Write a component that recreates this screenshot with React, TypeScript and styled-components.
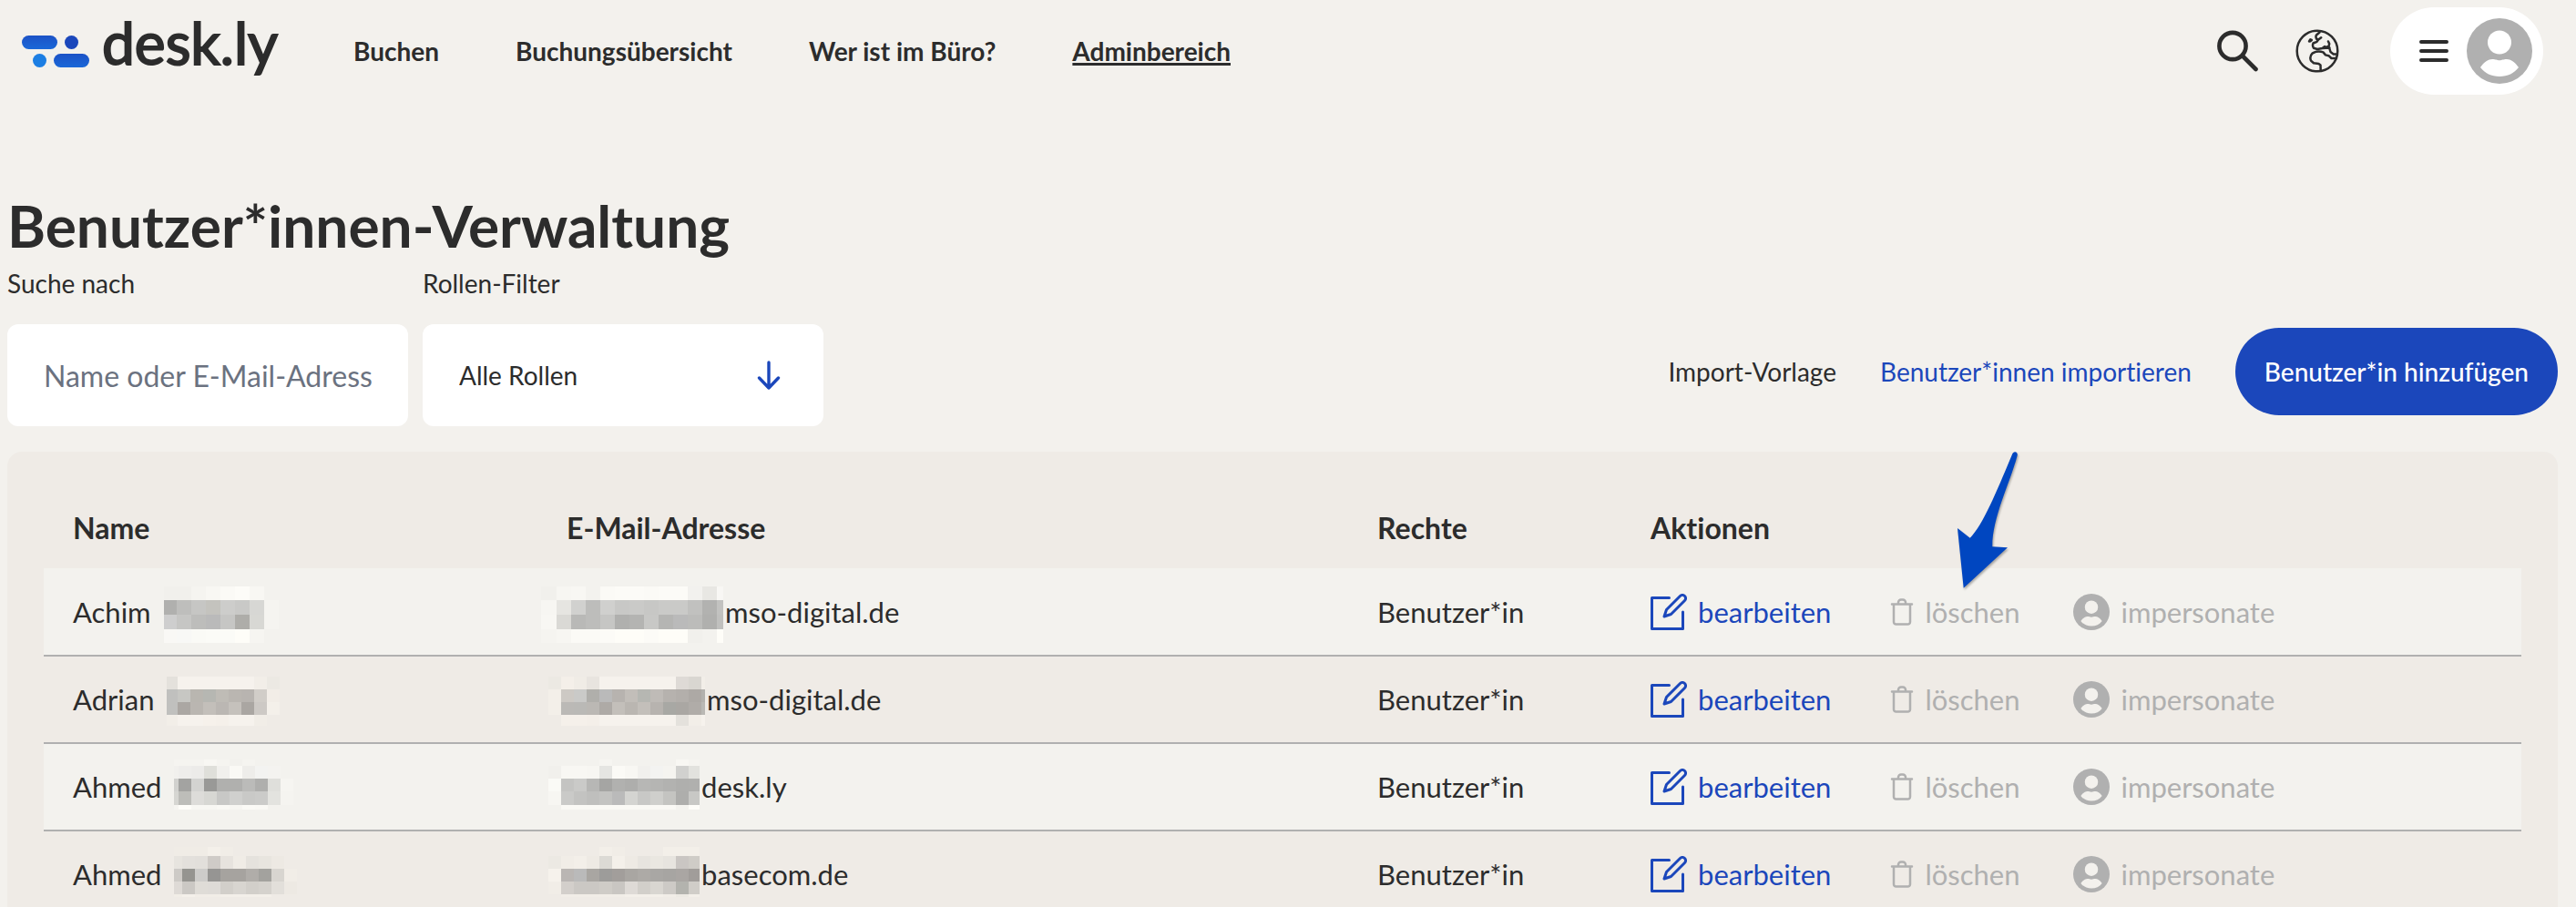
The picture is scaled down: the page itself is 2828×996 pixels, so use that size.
import React from "react";
import styled, { createGlobalStyle } from "styled-components";

const ink = "#2c2c2c";
const blue = "#1b47bb";
const muted = "#b0b0b0";
const paper = "#f3f1ed";
const sand = "#efebe6";

const GlobalStyle = createGlobalStyle`
  *, *::before, *::after { box-sizing: border-box; }
  body {
    margin: 0;
    background: ${paper};
    color: ${ink};
    font-family: Lato, "Open Sans", sans-serif;
    font-size: 28px;
    font-variant-ligatures: none;
    line-height: 34px;
  }
  button, input, select { font: inherit; color: inherit; }
`;

const Page = styled.div`
  height: 100vh;
  overflow: hidden;
`;

const Header = styled.header`
  display: flex;
  align-items: center;
  height: 112px;
  padding: 0 36px 0 24px;
`;

const Logo = styled.a`
  display: flex;
  align-items: center;
  gap: 12px;
  flex: 0 0 364px;
  color: inherit;
  text-decoration: none;
`;

const Wordmark = styled.span`
  padding-bottom: 18px;
  font-size: 64px;
  -webkit-text-stroke: 2px currentColor;
  line-height: 76px;
`;

const Nav = styled.nav`
  display: flex;
  gap: 84px;
`;

const NavLink = styled.a<{ $active?: boolean }>`
  color: inherit;
  font-weight: 700;
  white-space: nowrap;
  text-decoration: ${(p) => (p.$active ? "underline" : "none")};
  text-decoration-thickness: 3px;
  text-decoration-skip-ink: none;
`;

const HeaderTools = styled.div`
  display: flex;
  align-items: center;
  margin-left: auto;
`;

const IconButton = styled.button`
  display: flex;
  margin-right: 40px;
  padding: 0;
  border: 0;
  background: none;
  cursor: pointer;

  & + & { margin-right: 56px; }
`;

const AccountButton = styled.button`
  display: flex;
  align-items: center;
  gap: 20px;
  height: 96px;
  padding: 0 12px 0 32px;
  border: 0;
  border-radius: 48px;
  background: #fff;
  cursor: pointer;
`;

const Main = styled.main`
  padding: 98px 20px 0 8px;
`;

const Title = styled.h1`
  margin: 0 0 8px;
  font-size: 64px;
  font-weight: 700;
  line-height: 76px;
`;

const Toolbar = styled.div`
  display: flex;
  align-items: flex-end;
  gap: 16px;
  margin-bottom: 28px;
`;

const Field = styled.div`
  display: flex;
  flex-direction: column;
  gap: 28px;
  width: 440px;
`;

const SearchInput = styled.input`
  width: 100%;
  height: 112px;
  padding: 0 40px;
  border: 0;
  border-radius: 12px;
  background: #fff;
  font-size: 32px;

  &::placeholder { color: #6b7280; opacity: 1; }
`;

const SelectWrap = styled.div`
  position: relative;

  svg {
    position: absolute;
    top: 40px;
    right: 47px;
    pointer-events: none;
  }
`;

const Select = styled.select`
  display: block;
  width: 100%;
  height: 112px;
  padding: 0 80px 0 40px;
  border: 0;
  border-radius: 12px;
  background: #fff;
  appearance: none;
`;

const ToolbarActions = styled.div`
  display: flex;
  align-items: center;
  gap: 48px;
  margin-left: auto;
  padding-bottom: 12px;
`;

const TextLink = styled.a<{ $accent?: boolean }>`
  color: ${(p) => (p.$accent ? blue : ink)};
  text-decoration: none;
  white-space: nowrap;
`;

const PrimaryButton = styled.button`
  height: 96px;
  padding: 0 32px;
  border: 0;
  border-radius: 48px;
  background: ${blue};
  color: #fff;
  font-weight: 500;
  white-space: nowrap;
  cursor: pointer;
`;

const Panel = styled.section`
  position: relative;
  padding: 40px;
  border-radius: 16px;
  background: ${sand};
`;

const PointerArrow = styled.svg`
  position: absolute;
  top: 0;
  left: 76.4%;
  filter: drop-shadow(1px 2px 1px rgba(0, 0, 0, 0.3));
  pointer-events: none;
`;

const Table = styled.table`
  width: 100%;
  border-collapse: collapse;
  table-layout: fixed;
  font-size: 31px;
`;

const HeadCell = styled.th<{ $width?: string }>`
  width: ${(p) => p.$width ?? "auto"};
  height: 88px;
  padding: 0 32px;
  font-size: 32px;
  font-weight: 700;
  text-align: left;
`;

const Row = styled.tr`
  height: 96px;
  border-bottom: 2px solid ${muted};

  &:nth-child(odd) { background: #f3f2ee; }
`;

const Cell = styled.td<{ $flush?: boolean }>`
  padding: 0 0 0 ${(p) => (p.$flush ? "0" : "32px")};
  white-space: nowrap;
`;

const CellLine = styled.div<{ $gap: number }>`
  display: flex;
  align-items: center;
  gap: ${(p) => p.$gap}px;
`;

const ActionButton = styled.button`
  display: flex;
  align-items: center;
  gap: 12px;
  padding: 0;
  border: 0;
  background: none;
  color: ${blue};
  cursor: pointer;

  &:disabled { color: ${muted}; cursor: default; }
`;

const LogoMark = () => (
  <svg width="76" height="36" viewBox="0 0 76 36" aria-hidden="true">
    <defs>
      <linearGradient id="markTop" x1="0" y1="0" x2="0" y2="1">
        <stop offset="0" stopColor="#1c52c6" />
        <stop offset="1" stopColor="#1a68d8" />
      </linearGradient>
    </defs>
    <rect x="0" y="1" width="39" height="15" rx="7.5" fill="url(#markTop)" />
    <rect x="47" y="1" width="15" height="15" rx="7.5" fill="#1b47bb" />
    <rect x="12" y="21" width="15" height="15" rx="7.5" fill="#1c7ee3" />
    <rect x="35" y="21" width="39" height="15" rx="7.5" fill="url(#markTop)" />
  </svg>
);

const SearchIcon = () => (
  <svg width="46" height="46" viewBox="0 0 46 46" fill="none" stroke={ink} strokeWidth="4.6" strokeLinecap="round" aria-hidden="true">
    <circle cx="17" cy="17.5" r="14.6" />
    <path d="M28 28.500 42.500 43" />
  </svg>
);

const GlobeIcon = () => (
  <svg width="48" height="48" viewBox="0 0 48 48" fill="none" stroke={ink} strokeWidth="2.5" strokeLinecap="round" strokeLinejoin="round" aria-hidden="true">
    <circle cx="24" cy="24" r="22.3" />
    <path d="M16.300 11.300 17.800 12l-1.300 1.200-1.500.2z" />
    <path d="M26.500 3.500 23 6.500c-1 1.500-.5 3 .2 4.300l2 .7 3-2.300M25.200 11.500l-1.700 2.300-4 1.700c-.8 1.800-.6 3.700.5 5.200l4 1.300 5.500-1 2.700-2M29.500 21l4-.2 4-.3M36 13.500l1.200 2.500-.6 2.600c-.8 1-1.300.8-3.300 1.200M37 20l1.500 5 3.300 2.500h4" />
    <path d="M45 32h-5.500l-3-2.800-3.500-.8-2.500-3c-4-1.300-8.500-.8-12 1.200-2 2-2.500 5.500-1.500 8l3 2.700 5.500.8 2 1.500.2 6" />
  </svg>
);

const MenuIcon = () => (
  <svg width="32" height="24" viewBox="0 0 32 24" stroke={ink} strokeWidth="4" strokeLinecap="round" aria-hidden="true">
    <path d="M2 2h28M2 12h28M2 22h28" />
  </svg>
);

const PersonIcon = ({ size, inner }: { size: number; inner: string }) => (
  <svg width={size} height={size} viewBox="0 0 72 72" aria-hidden="true">
    <circle cx="36" cy="36" r="36" fill={muted} />
    <circle cx="36" cy="26.5" r="13" fill={inner} />
    <path fill={inner} d="M15 54c4-6 9-9 13-9 4 0 5 1.200 8 1.200S40 45 44 45s9 3 13 9c-5 6.500-12 10-21 10s-16-3.500-21-10z" />
  </svg>
);

const ArrowDownIcon = () => (
  <svg width="26" height="32" viewBox="0 0 26 32" fill="none" stroke={blue} strokeWidth="3.4" strokeLinecap="round" strokeLinejoin="round" aria-hidden="true">
    <path d="M13 2v28M2.500 19 13 30l10.500-11" />
  </svg>
);

const EditIcon = () => (
  <svg width="40" height="40" viewBox="0 0 40 40" fill="none" stroke={blue} strokeWidth="3" strokeLinecap="round" strokeLinejoin="round" aria-hidden="true">
    <path d="M20.500 4.500h-19v34h34V20" />
    <path d="M15 25l2.500-7.500 15-15a3.500 3.500 0 0 1 5 5l-15 15z" />
  </svg>
);

const TrashIcon = () => (
  <svg width="32" height="32" viewBox="-7 -1 32 32" fill="none" stroke={muted} strokeWidth="2.5" strokeLinecap="round" strokeLinejoin="round" aria-hidden="true">
    <path d="M1 6.500h22M8 6V4.500a3 3 0 0 1 3-3h2a3 3 0 0 1 3 3V6M3 7v19a2.500 2.500 0 0 0 2.500 2.500h13A2.500 2.500 0 0 0 21 26V7" />
  </svg>
);

type Blocks = { width: number; xs: number[]; ys: number[]; rows: string[] };

/* Pixelated cover for private data: a grid of blocks, one hex colour for each. */
const Mosaic = ({ width, xs, ys, rows }: Blocks) => (
  <svg width={width} height="68" viewBox={`0 14 ${width} 68`} shapeRendering="crispEdges" role="img" aria-label="unkenntlich gemacht">
    {rows.map((row, r) =>
      row.split(" ").map((c, i) =>
        c === "-" ? null : (
          <rect key={`${r}-${i}`} x={xs[i]} y={ys[r]} width={xs[i + 1] - xs[i]} height={ys[r + 1] - ys[r]} fill={`#${c}`} />
        )
      )
    )}
  </svg>
);

type User = { first: string; last: Blocks; mailbox: Blocks; domain: string };

const users: User[] = [
  {
    first: "Achim",
    last: {
      width: 126,
      xs: [0, 14, 30, 46, 62, 78, 94, 110, 126],
      ys: [20, 35, 51, 67, 82],
      rows: [
        "f1f0ec f1f0ec f5f4f0 f8f7f3 fbfaf6 fdfcf8 f8f7f3 -",
        "b0b0ae bebebc c6c6c4 c4c3be cdcdcb c9c9c7 d7d7d4 f5f4f0",
        "cecece c6c6c4 bdbdbb bababa c6c6c4 aeada9 d8d8d4 f5f4f0",
        "f9f8f5 f8f8f6 fafaf6 fbfbf7 fbfbf7 fefdf8 f6f5f1 -",
      ],
    },
    mailbox: {
      width: 206,
      xs: [4, 21, 37, 53, 69, 85, 101, 117, 133, 149, 165, 181, 197, 204],
      ys: [20, 35, 51, 67, 82],
      rows: [
        "f1f0ec f7f6f2 f8f7f3 f3f2ee fbfaf6 fcfbf7 fcfbf7 fbfaf6 fcfbf7 fcfbf7 f2f1ee e8e7e3 f8f7f4",
        "f7f6f2 e6e5e1 d1d1cf bdbdbb d0d0ce c8c8c6 cacac8 c7c7c5 cacac8 cacac8 c1c1bf b2b2b0 c2c2c0",
        "f8f7f3 dad9d5 b9b9b7 bdbdbb c6c6c4 b0b0ae b4b4b2 c8c8c6 b5b5b3 bababa bcbcba b0b0ae c0c0be",
        "f5f4f0 f7f6f2 fbfaf6 fbfaf6 fcfbf7 fefdf8 fefdf8 fcfbf7 fefdf8 fefdf8 f1f0ec f3f2ee fefdf8",
      ],
    },
    domain: "mso-digital.de",
  },
  {
    first: "Adrian",
    last: {
      width: 124,
      xs: [0, 12, 26, 40, 54, 68, 82, 96, 110, 124],
      ys: [23, 37, 51, 65, 77],
      rows: [
        "e4e1dc f6f2ed f6f2ed f6f2ed f6f2ed f6f2ed f6f2ed f2eee8 ece9e3",
        "c0c0be c7c7c3 b9b6b0 b6b7b2 bfbcb6 bab6b1 b8b4b0 d1cdc8 f2ede7",
        "c0c0be aba7a3 bab6b1 c3bfba bbb7b3 c5c1bc aaa6a2 cdc9c5 f4f0ea",
        "f2eee8 f6f2ed f6f2ed f6f1eb f5f0ea f6f2ed f6f2ed f1ede7 -",
      ],
    },
    mailbox: {
      width: 186,
      xs: [12, 26, 40, 54, 68, 82, 96, 110, 124, 138, 152, 166, 180, 184],
      ys: [23, 37, 51, 65, 77],
      rows: [
        "ece9e3 f4efe9 f0ece6 e8e4df f6f2ed f6f2ed f6f2ed f6f2ed f6f2ed f6f2ed dedad6 d9d6d1 f2eee8",
        "f3efe9 cdc9c4 cacac8 b0afab bababa b7b3af c2beb9 b6b7b2 bfbbb7 b6b2ae b3afab ada9a5 b3b1ad",
        "f3efe9 bbb9b6 bab9b6 bbb8b4 aeaaa6 c3bfba bab6b1 c3bfba b7b3af a8a8a4 aaa7a3 b0aca8 bab8b4",
        "- f5f0ea f5f0ea f4efe9 f6f2ed f6f2ed f6f2ed f6f2ed f6f2ed f6f2ed e4e1dc f2eee8 f6f2ed",
      ],
    },
    domain: "mso-digital.de",
  },
  {
    first: "Ahmed",
    last: {
      width: 131,
      xs: [0, 5, 19, 33, 47, 61, 75, 89, 103, 117, 131],
      ys: [18, 25, 39, 53, 68, 73],
      rows: [
        "f5f4f0 f5f4f0 f5f4f0 f8f7f3 f5f4f0 f2f1ed f5f4f0 - - -",
        "f1f0ed eeedeb ecebe9 dfdfda f1f0ed faf9f5 eeedea f3f3f1 f4f3f0 -",
        "d1d1ce a3a3a1 d3d3d1 999997 b0b0ae b0b0ae bbbbb9 afafad dfdfdb f6f5f1",
        "d6d6d2 bdbdb9 dddcd9 d7d7d3 c8c8c6 d0d0ce c9c9c7 cbcbc9 e3e3df f5f4f0",
        "f6f5f1 fefdf9 f8f7f3 f8f7f3 faf9f5 f7f6f2 fbfaf6 faf9f5 - -",
      ],
    },
    mailbox: {
      width: 180,
      xs: [12, 26, 40, 54, 68, 82, 96, 110, 124, 138, 152, 166, 178],
      ys: [18, 25, 39, 53, 68, 73],
      rows: [
        "- - - - f6f5f1 - - - - - f8f7f3 f5f4f0",
        "f1f0ec f8f7f3 f8f7f3 f7f6f2 e5e5e2 fbfaf6 f8f7f3 f1f0ed f3f3f1 f5f4f0 d1d1cf e2e2de",
        "fafaf6 c4c4c2 cacac8 b7b7b5 a5a5a3 b1b1af aeaeac b7b7b5 b5b5b3 b2b2b0 afafad b0b0ae",
        "f7f6f2 cacac8 c3c3c1 bfbfbd c3c3c1 bababa d4d4d1 c8c8c6 cfcfcc c4c4c1 aeaeac c8c8c5",
        "- faf9f5 faf9f5 faf9f5 faf9f5 faf9f5 faf9f5 faf9f5 faf9f5 faf9f5 f4f3ef fefdf9",
      ],
    },
    domain: "desk.ly",
  },
  {
    first: "Ahmed",
    last: {
      width: 135,
      xs: [0, 9, 23, 37, 51, 65, 79, 93, 107, 121, 135],
      ys: [18, 28, 42, 56, 70, 73],
      rows: [
        "f0ece6 f0ece6 f0ece6 f4f0ea f1ede7 - - - - -",
        "e7e4df e3e0dc e2dfdb cfcbc7 e7e3de f0ece6 e5e2dd e8e5df ede9e3 -",
        "cdcac6 959490 cdccca 969593 a6a39f a6a39f b0ada9 a3a29e d8d5d0 f1ede7",
        "dedad6 cbc8c4 dfdcd7 dedbd7 d2cfca d8d5d0 d2cfca d5d2cd e2dfda ede9e3",
        "f1ede7 f4f0ea f1ede7 f1ede7 f3efe9 f3efe9 f3efe9 f3efe9 - -",
      ],
    },
    mailbox: {
      width: 180,
      xs: [12, 26, 40, 54, 68, 82, 96, 110, 124, 138, 152, 166, 178],
      ys: [18, 28, 42, 56, 70, 73],
      rows: [
        "- - - - f3efe9 f1ede7 - - - f3efe9 f3efe9 f3efe9",
        "ece9e3 f1ede7 f3efe9 eeeae4 dcdad5 f4f0ea eeeae4 e7e4df eae7e1 e7e4df cac6c3 cfccc7",
        "f6f2ec bab6b3 bababa a9a6a2 9d9c9a a29e9b a9a6a2 adaaa6 a9a7a4 a7a5a2 aaa6a3 a19d9a",
        "f1ede7 d3cfcb cbc8c4 cbc8c4 cfccc7 c9c6c2 dedad6 d2cfca d9d6d1 cdcac6 b3b3ae d0cdc8",
        "- f1ede7 f1ede7 f1ede7 f1ede7 f1ede7 f3efe9 f3efe9 f3efe9 f1ede7 ece9e3 f3efe9",
      ],
    },
    domain: "basecom.de",
  },
];

const UserRow = ({ user }: { user: User }) => (
  <Row>
    <Cell>
      <CellLine $gap={14}>
        <span>{user.first}</span>
        <Mosaic {...user.last} />
      </CellLine>
    </Cell>
    <Cell $flush>
      <CellLine $gap={0}>
        <Mosaic {...user.mailbox} />
        <span>{user.domain}</span>
      </CellLine>
    </Cell>
    <Cell>Benutzer*in</Cell>
    <Cell>
      <CellLine $gap={59}>
        <ActionButton type="button">
          <EditIcon />
          bearbeiten
        </ActionButton>
        <ActionButton type="button" disabled>
          <TrashIcon />
          löschen
        </ActionButton>
        <ActionButton type="button" disabled>
          <PersonIcon size={40} inner={paper} />
          impersonate
        </ActionButton>
      </CellLine>
    </Cell>
  </Row>
);

export default function App() {
  return (
    <Page>
      <GlobalStyle />
      <Header>
        <Logo href="#">
          <LogoMark />
          <Wordmark>desk.ly</Wordmark>
        </Logo>
        <Nav>
          <NavLink href="#buchen">Buchen</NavLink>
          <NavLink href="#uebersicht">Buchungsübersicht</NavLink>
          <NavLink href="#buero">Wer ist im Büro?</NavLink>
          <NavLink href="#admin" $active aria-current="page">Adminbereich</NavLink>
        </Nav>
        <HeaderTools>
          <IconButton type="button" aria-label="Suche"><SearchIcon /></IconButton>
          <IconButton type="button" aria-label="Sprache"><GlobeIcon /></IconButton>
          <AccountButton type="button" aria-label="Konto">
            <MenuIcon />
            <PersonIcon size={72} inner="#fff" />
          </AccountButton>
        </HeaderTools>
      </Header>
      <Main>
        <Title>Benutzer*innen-Verwaltung</Title>
        <Toolbar>
          <Field>
            <label htmlFor="search">Suche nach</label>
            <SearchInput id="search" type="text" placeholder="Name oder E-Mail-Adresse" />
          </Field>
          <Field>
            <label htmlFor="role">Rollen-Filter</label>
            <SelectWrap>
              <Select id="role" defaultValue="all">
                <option value="all">Alle Rollen</option>
              </Select>
              <ArrowDownIcon />
            </SelectWrap>
          </Field>
          <ToolbarActions>
            <TextLink href="#vorlage">Import-Vorlage</TextLink>
            <TextLink href="#import" $accent>Benutzer*innen importieren</TextLink>
            <PrimaryButton type="button">Benutzer*in hinzufügen</PrimaryButton>
          </ToolbarActions>
        </Toolbar>
        <Panel>
          <Table>
            <thead>
              <tr>
                <HeadCell $width="19.93%">Name</HeadCell>
                <HeadCell $width="32.72%">E-Mail-Adresse</HeadCell>
                <HeadCell $width="11.03%">Rechte</HeadCell>
                <HeadCell>Aktionen</HeadCell>
              </tr>
            </thead>
            <tbody>
              {users.map((user, i) => (
                <UserRow key={i} user={user} />
              ))}
            </tbody>
          </Table>
          <PointerArrow width="72" height="154" viewBox="0 0 72 154" aria-hidden="true">
            <path
              fill="#0046c0"
              d="M8.700 149.700 2 84l13.700 10.700C30 81 46 41 62 3c1.500-4.500 6.500-3 5.700 1C60 34 40 72 40.300 104.300l16.700 1z"
            />
          </PointerArrow>
        </Panel>
      </Main>
    </Page>
  );
}
